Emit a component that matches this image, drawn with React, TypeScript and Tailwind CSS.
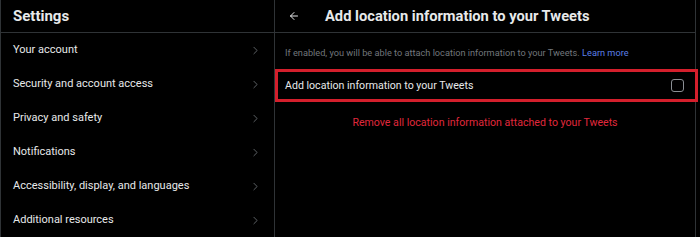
import { ChevronRight, ArrowLeft } from "lucide-react";

const items = [
  "Your account",
  "Security and account access",
  "Privacy and safety",
  "Notifications",
  "Accessibility, display, and languages",
  "Additional resources",
];

const App = () => {
  return (
    <div
      className="w-[700px] h-[237px] bg-black flex overflow-hidden text-[#e7e9ea]"
      style={{ fontFamily: "Roboto, 'Noto Sans', sans-serif" }}
    >
      <div className="w-[275px] shrink-0 border-l border-r border-[#2f3336] flex flex-col">
        <div className="h-[33px] border-b border-[#2f3336] flex items-center pl-[12px]">
          <span className="text-[15px] font-bold">Settings</span>
        </div>
        {items.map((label) => (
          <div key={label} className="h-[34px] flex items-center justify-between pl-[12px] pr-[12px]">
            <span className="text-[11px] text-[#e7e9ea]">{label}</span>
            <ChevronRight className="w-[13px] h-[13px] text-[#71767b]" strokeWidth={1.5} />
          </div>
        ))}
      </div>
      <div className="w-[421px] shrink-0 border-r border-[#2f3336] flex flex-col">
        <div className="h-[33px] border-b border-[#2f3336] flex items-center pl-[13px]">
          <ArrowLeft className="w-[12px] h-[12px] text-[#e7e9ea]" strokeWidth={2} />
          <span className="ml-[25px] text-[14.7px] font-bold">Add location information to your Tweets</span>
        </div>
        <div className="h-[35px] flex items-center pt-[4px] pl-[10px]">
          <span className="text-[9.2px] text-[#71767b]">
            If enabled, you will be able to attach location information to your Tweets.{" "}
            <span className="text-[#5b7fe6]">Learn more</span>
          </span>
        </div>
        <div className="relative h-[34px] flex items-center justify-between pt-[1px] pl-[10px] pr-[11px]">
          <span className="text-[10.6px]">Add location information to your Tweets</span>
          <div className="w-[13px] h-[13px] rounded-[3px] border-[1.5px] border-[#8b8f94]" />
          <div className="absolute left-0 -right-[3px] top-[1px] bottom-0 border-[3px] border-[#d41f2c]" />
        </div>
        <div className="h-[40px] flex items-center justify-center pt-[1px]">
          <span className="text-[10.6px] text-[#e0283c]">Remove all location information attached to your Tweets</span>
        </div>
      </div>
    </div>
  );
};

export default App;
